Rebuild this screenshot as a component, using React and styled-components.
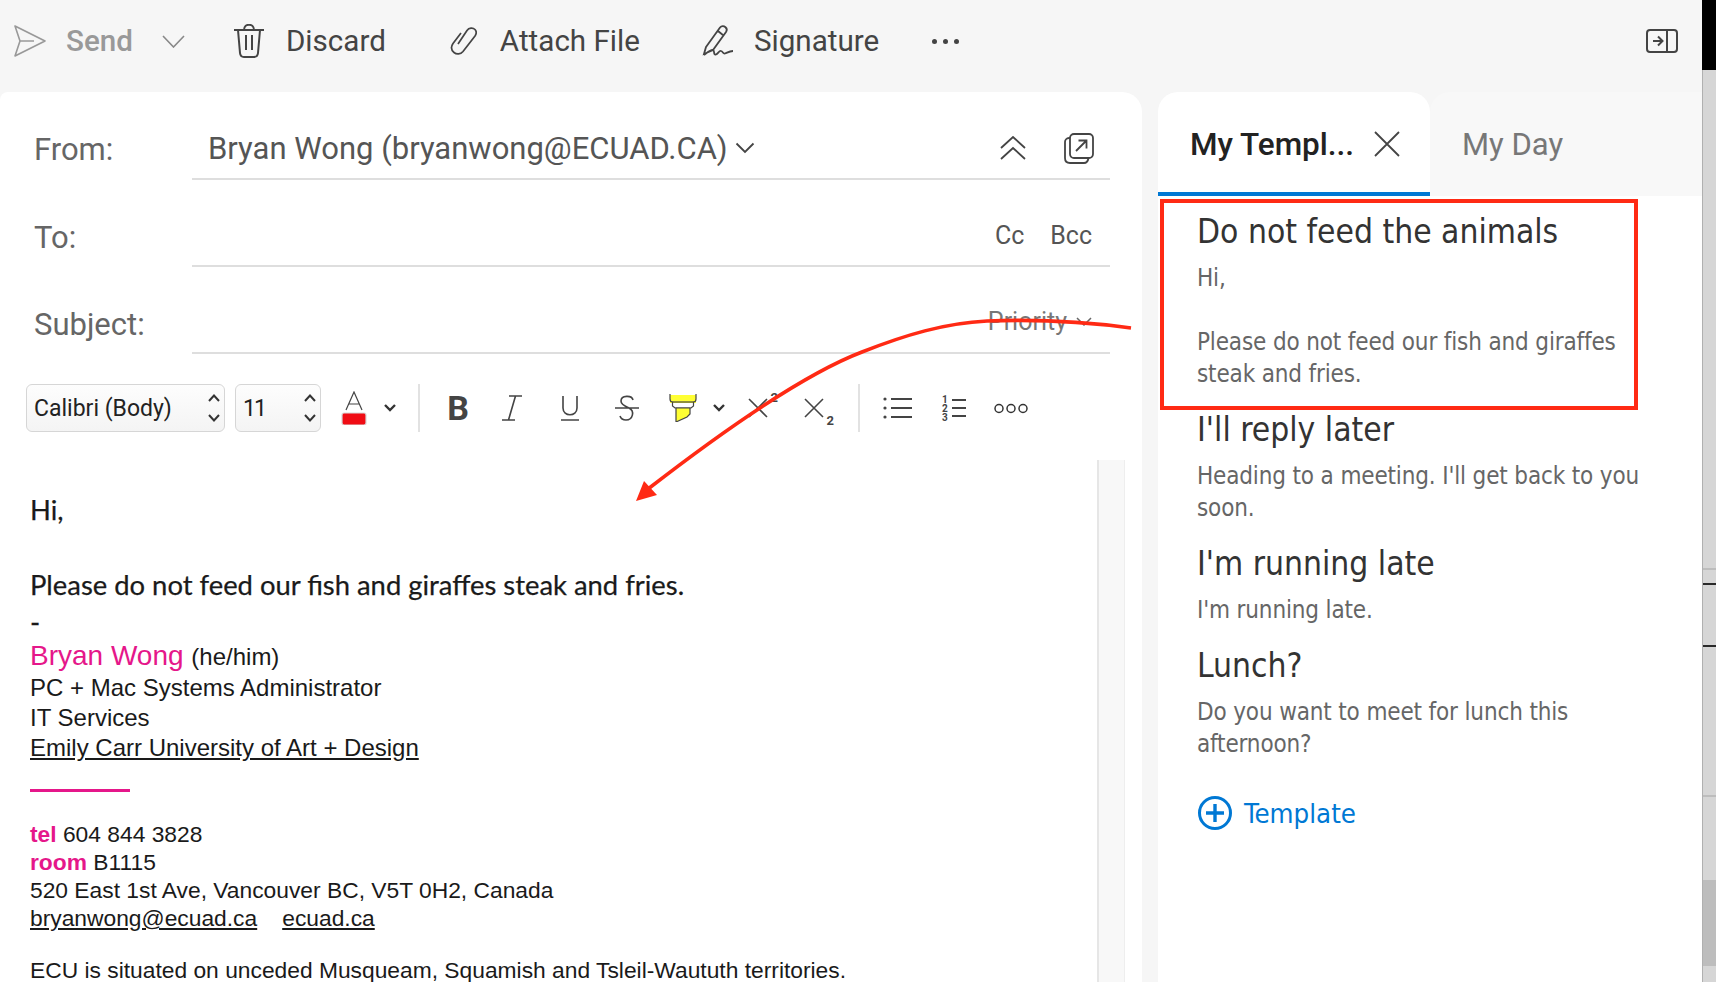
import React from "react";
import styled, { createGlobalStyle } from "styled-components";

const GlobalStyle = createGlobalStyle`
  html, body { margin:0; padding:0; background:#fff; }
  body { height:982px; overflow:hidden; font-family:Roboto,"Liberation Sans",sans-serif; }
`;

const Ic = ({ w, h, vb, sw = 2, color = "#444", ml = 0, children }) => (
  <IconSvg width={w} height={h} viewBox={vb || `0 0 ${w} ${h}`} fill="none" stroke={color} strokeWidth={sw} $ml={ml}>
    {children}
  </IconSvg>
);

const templates = [
  { title: "Do not feed the animals", body: ["Hi,", "", "Please do not feed our fish and giraffes", "steak and fries."] },
  { title: "I'll reply later", body: ["Heading to a meeting. I'll get back to you", "soon."] },
  { title: "I'm running late", body: ["I'm running late."] },
  { title: "Lunch?", body: ["Do you want to meet for lunch this", "afternoon?"] },
];

const App = () => {
  return (
    <Page>
      <GlobalStyle />
      <Main>
        <Toolbar>
          <Ic w={32} h={32} ml={14} sw={1.6} color="#999">
            <path d="M1 1 L31 16 L1 31 L6 16 Z M6 16 H20" strokeLinejoin="round" />
          </Ic>
          <ToolText $ml={20} $muted>Send</ToolText>
          <Ic w={23} h={13} ml={29} sw={1.6} color="#888">
            <path d="M1 1 L11.5 12 L22 1" />
          </Ic>
          <Ic w={32} h={34} ml={48} sw={2}>
            <path d="M1 6 H31 M11 6 C11 -1 21 -1 21 6 M5 6 L7 29 C7.3 32 9 33 11 33 H21 C23 33 24.7 32 25 29 L27 6 M13 11 V26 M19 11 V26" />
          </Ic>
          <ToolText $ml={21}>Discard</ToolText>
          <Ic w={27} h={28} ml={64} sw={1.7}>
            <path d="M8 17 L17 3.5 C19 0.5 23 0.5 25 2.5 C26.8 4.5 26.3 7 25 9 L13 24.5 C10.5 27.5 6.5 27.5 4 25.5 C1 23 1 19.5 3 16.5 L11 6" />
          </Ic>
          <ToolText $ml={23}>Attach File</ToolText>
          <Ic w={33} h={32} ml={61} sw={1.8}>
            <path d="M5 22 L19 2.5 C20.5 0.8 23 1 24.5 2.2 C26 3.5 26 5.5 25 7 L12 25 L3 29 Z M17 6 L22.5 10.5 M3 30 C7 27 10 24 12 25 C14 26 12 30 15 29.5 C17 29 18 25.5 20 26 C22 26.5 22 29 24 28.5 C26 28 28 26 32 26" />
          </Ic>
          <ToolText $ml={20}>Signature</ToolText>
          <Dots $ml={53}><Dot /><Dot /><Dot /></Dots>
          <RightIcon>
            <Ic w={32} h={24} sw={2}>
              <rect x="1" y="1" width="30" height="22" rx="3" />
              <path d="M21 1 V23 M7 12 H16 M12 7.5 L16.5 12 L12 16.5" />
            </Ic>
          </RightIcon>
        </Toolbar>

        <Content>
          <Composer>
            <FormRow $h={88}>
              <RowLabel>From:</RowLabel>
              <RowField>
                <FromValue>Bryan Wong (bryanwong@ECUAD.CA)</FromValue>
                <Ic w={20} h={12} ml={7} sw={1.8}>
                  <path d="M1.5 1.5 L10 10 L18.5 1.5" />
                </Ic>
                <FieldEnd $pull>
                  <Ic w={26} h={24} sw={1.8}>
                    <path d="M1 12 L13 1 L25 12 M1 23 L13 12 L25 23" />
                  </Ic>
                  <Ic w={30} h={31} ml={38} sw={1.8}>
                    <rect x="6" y="1" width="23" height="24" rx="4" />
                    <path d="M6 5 H5 C2.5 5 1 7 1 9 V25 C1 28 3 30 6 30 H20 C22.5 30 24 28 24.5 25 M12 18 L22 8 M14.5 7.5 H22.5 V15.5" />
                  </Ic>
                </FieldEnd>
              </RowField>
            </FormRow>
            <FormRow $h={87}>
              <RowLabel>To:</RowLabel>
              <RowField>
                <FieldEnd>
                  <SmallLink>Cc</SmallLink>
                  <SmallLink $ml={26}>Bcc</SmallLink>
                </FieldEnd>
              </RowField>
            </FormRow>
            <FormRow $h={87}>
              <RowLabel>Subject:</RowLabel>
              <RowField>
                <FieldEnd $lift>
                  <SmallLink $muted>Priority</SmallLink>
                  <Ic w={16} h={9} ml={9} sw={1.5} color="#666">
                    <path d="M1 1 L8 8 L15 1" />
                  </Ic>
                </FieldEnd>
              </RowField>
            </FormRow>

            <FormatBar>
              <SelectBox $w={199}>
                <SelectText>Calibri (Body)</SelectText>
                <Stepper />
              </SelectBox>
              <SelectBox $w={86} $ml={10}>
                <SelectText $tight>11</SelectText>
                <Stepper />
              </SelectBox>
              <Ic w={26} h={34} ml={20} sw={1.2} vb="0 0 26 34">
                <path d="M5 19 L13 1 L21 19 M8 13 H18" />
                <rect x="1" y="22" width="24" height="12" rx="2" fill="#f00c14" stroke="#d8d8d8" />
              </Ic>
              <Ic w={12} h={8} ml={17} sw={2.4} color="#333"><path d="M1 1 L6 6 L11 1" /></Ic>
              <Divider $ml={22} />
              <BoldMark>B</BoldMark>
              <Ic w={24} h={26} ml={30} sw={1.6}>
                <path d="M9 1 H22 M2 25 H15 M15.5 1 L8.5 25" />
              </Ic>
              <Ic w={24} h={26} ml={34} sw={1.6}>
                <path d="M5 1 V13 C5 22 19 22 19 13 V1 M3 25 H21" />
              </Ic>
              <Ic w={26} h={26} ml={32} sw={1.6}>
                <path d="M1 13 H25 M19 5 C18 0 7 0 7 6 C7 10 13 12 15 13 C21 16 19 25 12 25 C9 25 7 24 6 21" />
              </Ic>
              <Ic w={28} h={28} ml={29} sw={1.2}>
                <rect x="1" y="1" width="26" height="8" fill="#ffff33" stroke="none" />
                <path d="M1 0 V5 C1 7 2 8 3.5 8 V12 L6 14 H22 L24.5 12 V8 C26 8 27 7 27 5 V0" />
                <path d="M3.5 8 H24.5" />
                <path d="M7 14 H21 V20 L18 23 L7 28 Z" fill="#ffff33" />
              </Ic>
              <Ic w={12} h={8} ml={16} sw={2.4} color="#333"><path d="M1 1 L6 6 L11 1" /></Ic>
              <ScriptIcon $ml={23}>
                <Ic w={20} h={20} sw={1.6}><path d="M1 1 L19 19 M19 1 L1 19" /></Ic>
                <Sup>2</Sup>
              </ScriptIcon>
              <ScriptIcon $ml={26}>
                <Ic w={20} h={20} sw={1.6}><path d="M1 1 L19 19 M19 1 L1 19" /></Ic>
                <Sub>2</Sub>
              </ScriptIcon>
              <Divider $ml={24} />
              <Ic w={30} h={24} ml={22} sw={2}>
                <circle cx="3" cy="3" r="1.6" fill="#444" stroke="none" />
                <circle cx="3" cy="12" r="1.6" fill="#444" stroke="none" />
                <circle cx="3" cy="21" r="1.6" fill="#444" stroke="none" />
                <path d="M9 3 H30 M9 12 H30 M9 21 H30" />
              </Ic>
              <NumList $ml={30}>
                <NumCol><span>1</span><span>2</span><span>3</span></NumCol>
                <Ic w={14} h={20} sw={2}><path d="M0 2 H14 M0 10 H14 M0 18 H14" /></Ic>
              </NumList>
              <Ic w={34} h={11} ml={22} sw={1.5} color="#333">
                <circle cx="5" cy="5.5" r="4" />
                <circle cx="17" cy="5.5" r="4" />
                <circle cx="29" cy="5.5" r="4" />
              </Ic>
            </FormatBar>

            <BodyArea>
              <Message>
                <CalibriLine>Hi,</CalibriLine>
                <CalibriLine $mt={41}>Please do not feed our fish and giraffes steak and fries.</CalibriLine>
                <CalibriLine $mt={3}>-</CalibriLine>
                <SigName><Pink>Bryan Wong</Pink> <small>(he/him)</small></SigName>
                <SigLine>PC + Mac Systems Administrator</SigLine>
                <SigLine>IT Services</SigLine>
                <SigLine><u>Emily Carr University of Art + Design</u></SigLine>
                <PinkRule />
                <InfoLine $mt={28}><PinkBold>tel</PinkBold> 604 844 3828</InfoLine>
                <InfoLine><PinkBold>room</PinkBold> B1115</InfoLine>
                <InfoLine>520 East 1st Ave, Vancouver BC, V5T 0H2, Canada</InfoLine>
                <InfoLine><u>bryanwong@ecuad.ca</u><LinkGap /><u>ecuad.ca</u></InfoLine>
                <InfoLine $mt={24}>ECU is situated on unceded Musqueam, Squamish and Tsleil-Waututh territories.</InfoLine>
              </Message>
              <ScrollTrack />
            </BodyArea>
          </Composer>

          <SidePanel>
            <Tabs>
              <ActiveTab>
                <ActiveLabel>My Templ...</ActiveLabel>
                <Ic w={26} h={26} ml={20} sw={1.8}><path d="M1 1 L25 25 M25 1 L1 25" /></Ic>
              </ActiveTab>
              <IdleTab>My Day</IdleTab>
            </Tabs>
            <TemplateList>
              {templates.map((t) => (
                <Template key={t.title}>
                  <TemplateTitle>{t.title}</TemplateTitle>
                  <TemplateBody>
                    {t.body.map((line, i) => (
                      <BodyLine key={i}>{line || "\u00a0"}</BodyLine>
                    ))}
                  </TemplateBody>
                </Template>
              ))}
              <AddTemplate>
                <svg width="36" height="36" viewBox="0 0 36 36" fill="none" stroke="#0078d4">
                  <circle cx="18" cy="18" r="15.5" strokeWidth="3" />
                  <path d="M9 18 H27 M18 9 V27" strokeWidth="3.4" />
                </svg>
                <span>Template</span>
              </AddTemplate>
            </TemplateList>
          </SidePanel>
        </Content>
      </Main>

      <Strip>
        <StripTop />
        <StripMark $top={498} />
        <StripMark $top={13} $dark />
        <StripMark $top={60} $dark />
        <StripMark $top={148} />
        <StripThumb />
      </Strip>

      <Highlight />
      <Arrow width="1716" height="982" viewBox="0 0 1716 982" fill="none">
        <path d="M1131 328 C1095 323 1040 319 987 321 C945 323 905 335 862 352 C820 368 750 410 648 489" stroke="#ff2a14" strokeWidth="3.6" />
        <path d="M636 501 L644 481 L657 495 Z" fill="#ff2a14" />
      </Arrow>
    </Page>
  );
};

const Stepper = () => (
  <StepperSvg width="14" height="30" viewBox="0 0 14 30" fill="none" stroke="#333" strokeWidth="2">
    <path d="M2 8 L7 2.5 L12 8 M2 22 L7 27.5 L12 22" />
  </StepperSvg>
);

export default App;

const Page = styled.div`
  width:1716px;
  height:982px;
  display:flex;
  position:relative;
  overflow:hidden;
`;
const Main = styled.div`
  width:1702px;
  display:flex;
  flex-direction:column;
  background:#f6f6f6;
`;
const IconSvg = styled.svg`
  display:block;
  flex:none;
  margin-left:${(p) => p.$ml}px;
`;
const Toolbar = styled.div`
  height:92px;
  display:flex;
  align-items:center;
  padding-bottom:10px;
  box-sizing:border-box;
`;
const ToolText = styled.div`
  margin-left:${(p) => p.$ml}px;
  font-size:29.6px;
  color:${(p) => (p.$muted ? "#999" : "#444")};
  font-weight:${(p) => (p.$muted ? 500 : 400)};
`;
const Dots = styled.div`
  margin-left:${(p) => p.$ml}px;
  display:flex;
  gap:6px;
`;
const Dot = styled.div`
  width:5px;
  height:5px;
  border-radius:50%;
  background:#444;
`;
const RightIcon = styled.div`
  margin-left:auto;
  padding-right:24px;
`;
const Content = styled.div`
  flex:1;
  display:flex;
  min-height:0;
`;
const Composer = styled.div`
  width:1142px;
  margin-right:16px;
  background:#fff;
  border-top-right-radius:20px;
  border-top-left-radius:8px;
  display:flex;
  flex-direction:column;
`;
const FormRow = styled.div`
  height:${(p) => p.$h}px;
  display:flex;
  padding-left:34px;
  padding-right:32px;
`;
const RowLabel = styled.div`
  width:158px;
  font-size:31px;
  color:#666;
  line-height:115px;
  height:86px;
`;
const RowField = styled.div`
  flex:1;
  padding:26px 18px 0 16px;
  box-sizing:border-box;
  border-bottom:2px solid #dedede;
  display:flex;
  align-items:center;
`;
const FromValue = styled.div`
  font-size:31px;
  color:#555;
`;
const FieldEnd = styled.div`
  margin-left:auto;
  display:flex;
  align-items:center;
  margin-bottom:${(p) => (p.$lift ? 3 : 0)}px;
  margin-right:${(p) => (p.$pull ? -2 : 0)}px;
`;
const SmallLink = styled.div`
  margin-left:${(p) => p.$ml || 0}px;
  font-size:25px;
  color:${(p) => (p.$muted ? "#777" : "#555")};
`;
const FormatBar = styled.div`
  height:106px;
  padding:30px 0 28px 26px;
  box-sizing:border-box;
  display:flex;
  align-items:center;
`;
const SelectBox = styled.div`
  width:${(p) => p.$w}px;
  margin-left:${(p) => p.$ml || 0}px;
  height:48px;
  box-sizing:border-box;
  flex:none;
  border:1px solid #d6d6d6;
  border-radius:6px;
  background:linear-gradient(#fdfdfd,#f4f4f4);
  display:flex;
  align-items:center;
  justify-content:space-between;
  padding:0 3px 0 7px;
`;
const SelectText = styled.div`
  font-size:23px;
  color:#222;
  letter-spacing:${(p) => (p.$tight ? "-2px" : "0")};
`;
const StepperSvg = styled.svg`
  display:block;
  flex:none;
`;
const Divider = styled.div`
  width:2px;
  height:48px;
  flex:none;
  background:#e2e2e2;
  margin-left:${(p) => p.$ml}px;
`;
const BoldMark = styled.div`
  width:24px;
  margin-left:26px;
  text-align:center;
  font-size:34px;
  font-weight:700;
  color:#444;
  flex:none;
`;
const ScriptIcon = styled.div`
  position:relative;
  width:30px;
  height:26px;
  margin-left:${(p) => p.$ml}px;
  flex:none;
  display:flex;
  align-items:center;
`;
const Sup = styled.span`
  position:absolute;
  right:0;
  top:-5px;
  font-size:13px;
  font-weight:700;
  color:#444;
`;
const Sub = styled.span`
  position:absolute;
  right:0;
  bottom:-7px;
  font-size:13px;
  font-weight:700;
  color:#444;
`;
const NumList = styled.div`
  width:30px;
  margin-left:${(p) => p.$ml}px;
  display:flex;
  align-items:center;
  gap:4px;
  flex:none;
`;
const NumCol = styled.div`
  display:flex;
  flex-direction:column;
  font-size:10px;
  line-height:9px;
  font-weight:700;
  color:#444;
`;
const BodyArea = styled.div`
  flex:1;
  display:flex;
  min-height:0;
`;
const Message = styled.div`
  flex:1;
  padding:33px 0 0 30px;
  color:#1a1a1a;
  overflow:hidden;
  white-space:nowrap;
`;
const ScrollTrack = styled.div`
  width:28px;
  margin-right:17px;
  box-sizing:border-box;
  background:#f8f8f8;
  border-left:2px solid #e6e6e6;
  border-right:1px solid #eeeeee;
`;
const CalibriLine = styled.div`
  font-family:Lato,"Open Sans",sans-serif;
  font-size:27.4px;
  line-height:34px;
  margin-top:${(p) => p.$mt || 0}px;
  -webkit-text-stroke:0.25px #1a1a1a;
`;
const SigName = styled.div`
  font-family:"Liberation Sans",Arial,sans-serif;
  font-size:28px;
  line-height:33px;
  small { font-size:24px; }
`;
const Pink = styled.span`
  color:#e5178a;
`;
const SigLine = styled.div`
  font-family:"Liberation Sans",Arial,sans-serif;
  font-size:24px;
  line-height:30px;
`;
const PinkRule = styled.div`
  width:100px;
  height:3px;
  background:#e5178a;
  margin-top:26px;
`;
const InfoLine = styled.div`
  font-family:"Liberation Sans",Arial,sans-serif;
  font-size:22.8px;
  line-height:28px;
  margin-top:${(p) => p.$mt || 0}px;
`;
const PinkBold = styled.b`
  color:#e5178a;
`;
const LinkGap = styled.span`
  display:inline-block;
  width:25px;
`;
const SidePanel = styled.div`
  flex:1;
  display:flex;
  flex-direction:column;
  background:#fff;
  min-width:0;
`;
const Tabs = styled.div`
  height:104px;
  display:flex;
  flex:none;
  background:#f6f6f6;
`;
const ActiveTab = styled.div`
  width:272px;
  box-sizing:border-box;
  display:flex;
  align-items:center;
  padding:4px 0 0 32px;
  background:#fff;
  border-radius:20px 20px 0 0;
  border-bottom:4px solid #0078d4;
`;
const ActiveLabel = styled.div`
  font-size:31.5px;
  font-weight:500;
  color:#222;
`;
const IdleTab = styled.div`
  flex:1;
  display:flex;
  align-items:center;
  padding-left:32px;
  background:#f8f8f8;
  border-radius:20px 0 0 0;
  font-size:31px;
  color:#777;
`;
const TemplateList = styled.div`
  padding:14px 0 0 39px;
  font-family:"DejaVu Sans",sans-serif;
  font-stretch:condensed;
`;
const Template = styled.div`
  margin-bottom:18px;
`;
const TemplateTitle = styled.div`
  font-size:33.3px;
  line-height:44px;
  color:#333;
`;
const TemplateBody = styled.div`
  margin-top:8px;
`;
const BodyLine = styled.div`
  font-size:24px;
  letter-spacing:-0.15px;
  line-height:32px;
  color:#666;
`;
const AddTemplate = styled.div`
  display:flex;
  align-items:center;
  gap:11px;
  margin-top:-18px;
  padding-top:35px;
  font-size:27.4px;
  color:#0078d4;
`;
const Strip = styled.div`
  width:14px;
  display:flex;
  flex-direction:column;
  background:#d6d6d6;
  border-left:1px solid #b0b0b0;
  box-sizing:border-box;
`;
const StripTop = styled.div`
  height:70px;
  margin-left:-1px;
  background:#000;
`;
const StripMark = styled.div`
  height:2px;
  margin-top:${(p) => p.$top}px;
  background:${(p) => (p.$dark ? "#2a2a2a" : "#bdbdbd")};
`;
const StripThumb = styled.div`
  height:86px;
  margin-top:83px;
  background:#bdbdbd;
`;
const Highlight = styled.div`
  position:absolute;
  left:1160px;
  top:199px;
  width:478px;
  height:211px;
  box-sizing:border-box;
  border:4px solid #ff2a14;
  pointer-events:none;
`;
const Arrow = styled.svg`
  position:absolute;
  left:0;
  top:0;
  pointer-events:none;
`;
